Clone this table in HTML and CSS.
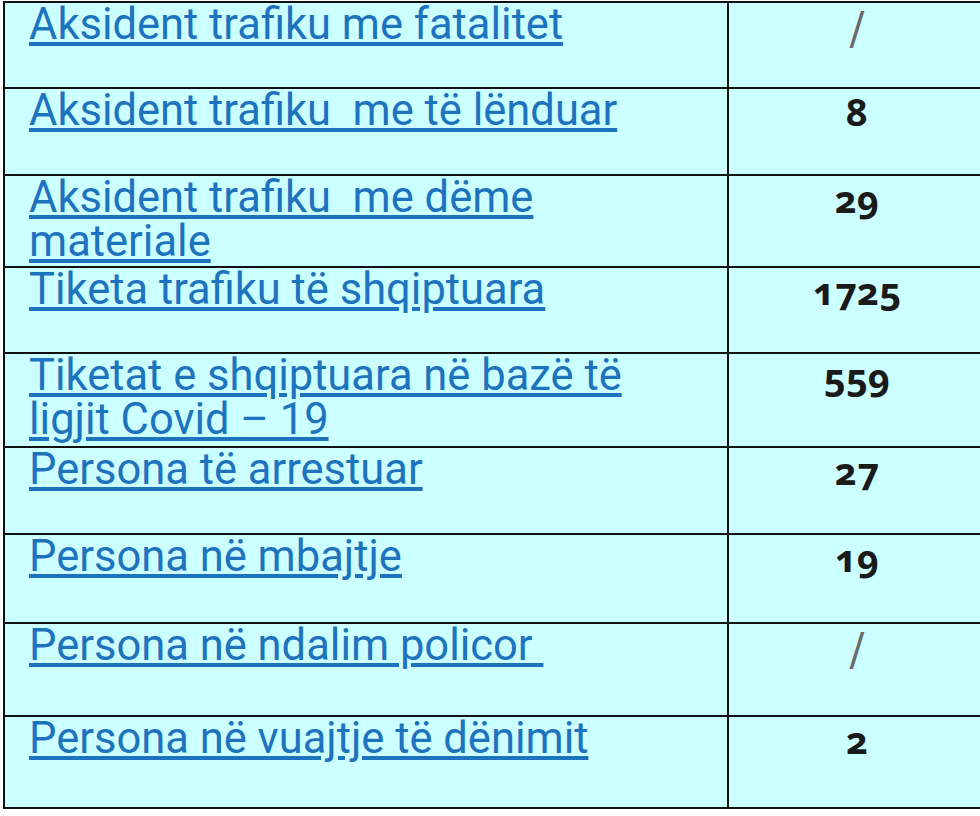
FILE: index.html
```html
<!DOCTYPE html>
<html lang="sq">
<head>
<meta charset="utf-8">
<title>Statistika</title>
<link rel="stylesheet" href="styles.css">
</head>
<body>
<table class="stats">
  <tr class="r1">
    <td class="label"><a href="#">Aksident trafiku me fatalitet</a></td>
    <td class="value"><span class="none">/</span></td>
  </tr>
  <tr class="r2">
    <td class="label"><a href="#">Aksident trafiku&nbsp; me të lënduar</a></td>
    <td class="value">8</td>
  </tr>
  <tr class="r3">
    <td class="label"><a href="#">Aksident trafiku&nbsp; me dëme materiale</a></td>
    <td class="value">29</td>
  </tr>
  <tr class="r4">
    <td class="label"><a href="#">Tiketa trafiku të shqiptuara</a></td>
    <td class="value">1725</td>
  </tr>
  <tr class="r5">
    <td class="label"><a href="#">Tiketat e shqiptuara në bazë të ligjit Covid – 19</a></td>
    <td class="value">559</td>
  </tr>
  <tr class="r6">
    <td class="label"><a href="#">Persona të arrestuar</a></td>
    <td class="value">27</td>
  </tr>
  <tr class="r7">
    <td class="label"><a href="#">Persona në mbajtje</a></td>
    <td class="value">19</td>
  </tr>
  <tr class="r8">
    <td class="label"><a href="#">Persona në ndalim policor&nbsp;</a></td>
    <td class="value"><span class="none">/</span></td>
  </tr>
  <tr class="r9">
    <td class="label"><a href="#">Persona në vuajtje të dënimit</a></td>
    <td class="value">2</td>
  </tr>
</table>
</body>
</html>
```
FILE: styles.css
```css
html, body {
  margin: 0;
  padding: 0;
  background: #ffffff;
}

.stats {
  border-collapse: collapse;
  margin: 1px 0 0 3px;
  width: 984px;
  table-layout: fixed;
  background: #ccffff;
}

.stats td {
  border: 2px solid #111111;
  vertical-align: top;
  padding: 0;
}

.stats td.label {
  width: 678px;
  padding: 0 20px 0 24px;
  font-family: Roboto, "Liberation Sans", sans-serif;
  font-size: 43.5px;
  line-height: 44px;
}

.label a {
  color: #1e73be;
  text-decoration: underline;
}

.value {
  text-align: center;
  font-family: "Noto Sans", "DejaVu Sans", sans-serif;
  font-weight: bold;
  font-size: 38px;
  line-height: 44px;
  font-variant-numeric: oldstyle-nums;
  color: #1a1a1a;
}

.value .none {
  display: block;
  font-family: "DejaVu Serif", serif;
  font-weight: normal;
  font-size: 44px;
  line-height: 52px;
  color: #6a6a6a;
}

.r1 { height: 86px; }
.r2 { height: 87px; }
.r3 { height: 92px; }
.r4 { height: 86px; }
.r5 { height: 94px; }
.r6 { height: 87px; }
.r7 { height: 89px; }
.r8 { height: 93px; }
.r9 { height: 92px; }
```
